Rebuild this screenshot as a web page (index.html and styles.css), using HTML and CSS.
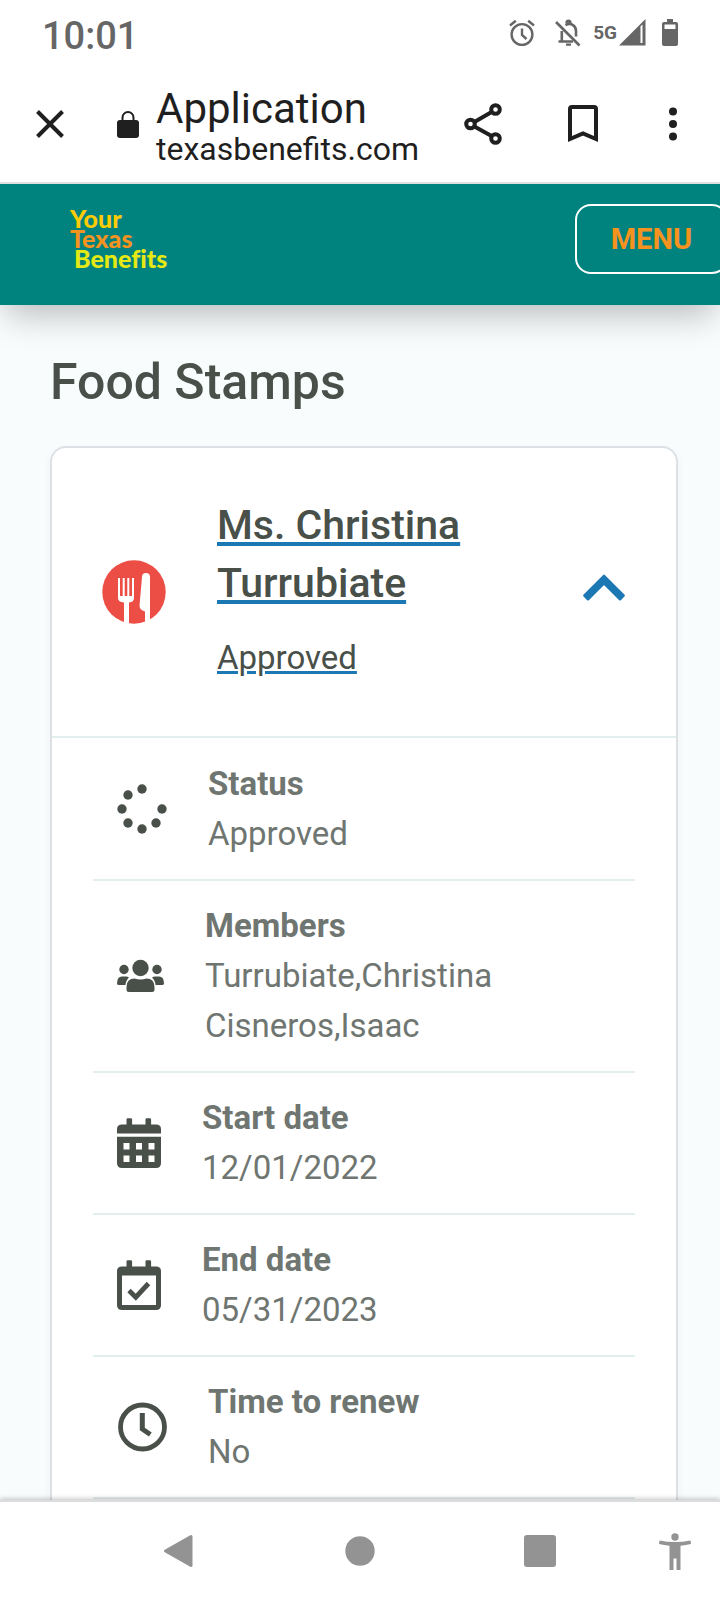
FILE: index.html
```html
<!DOCTYPE html>
<html lang="en">
<head>
<meta charset="utf-8">
<meta name="viewport" content="width=device-width, initial-scale=1">
<title>Application</title>
<link rel="stylesheet" href="styles.css">
</head>
<body>
<div class="screen">
  <div class="status-bar">
    <time class="clock">10:01</time>
    <div class="status-icons">
      <svg class="alarm" width="26" height="28" viewBox="0 0 26 28" fill="none" stroke="#666" stroke-width="2.4">
        <circle cx="13" cy="15.5" r="10.4"/><path d="M1 6.5 6.8 1.8M25 6.5 19.200 1.800M13 9.500v6.500l4.500 4"/>
      </svg>
      <svg class="bell" width="26" height="28" viewBox="0 0 26 28" fill="none" stroke="#666" stroke-width="2.6">
        <path d="M1 3 24.500 26.500"/><path d="M3.500 22.500H18M6.800 22V12M10.500 6.200C15.500 2.800 21 6.500 21 12v5.500"/><path d="M11.500 3.500a2 2 0 0 1 4 0zM11 25.600h5" stroke-width="2.200"/>
      </svg>
      <span class="network">5G</span>
      <svg class="signal" width="27" height="27" viewBox="0 0 27 27"><path fill="#666" d="M0 26.500 26.500 0v26.500z"/><path fill="#fff" d="M21.500 7.500 23.500 5.500V24h-2z"/></svg>
      <svg width="16" height="27" viewBox="0 0 16 27"><path fill="#666" fill-rule="evenodd" d="M5 0h6v3h3q2 0 2 2v20q0 2-2 2H2q-2 0-2-2V5q0-2 2-2h3zM2.500 5.500V10h11V5.500z"/></svg>
    </div>
  </div>

  <div class="toolbar">
    <button class="tool close" type="button" aria-label="Close"><svg width="28" height="28" viewBox="0 0 28 28"><path d="M1.500 1.500 26.500 26.500M26.500 1.500 1.500 26.500" stroke="#1f1f1f" stroke-width="4"/></svg></button>
    <svg class="lock" width="22" height="27" viewBox="0 0 22 27"><rect y="9" width="22" height="18" rx="3" fill="#1f1f1f"/><path d="M5.500 10V6.500a5.500 5.500 0 0 1 11 0V10" fill="none" stroke="#1f1f1f" stroke-width="2"/></svg>
    <div class="page-info">
      <div class="page-title">Application</div>
      <div class="page-host">texasbenefits.com</div>
    </div>
    <button class="tool share" type="button" aria-label="Share"><svg width="38" height="42" viewBox="0 0 38 42" fill="none" stroke="#1f1f1f" stroke-width="4"><path d="M9.500 19.500 28.500 8.500M9.500 23 28.500 33.500"/><circle cx="6.500" cy="21" r="4.300"/><circle cx="31.500" cy="6.500" r="4.300"/><circle cx="31.500" cy="35.500" r="4.300"/></svg></button>
    <button class="tool bookmark" type="button" aria-label="Bookmark"><svg width="30" height="38" viewBox="0 0 30 38"><path d="M2 34V4q0-2 2-2h22q2 0 2 2v30l-13-5.500z" fill="none" stroke="#1f1f1f" stroke-width="4"/></svg></button>
    <button class="tool" type="button" aria-label="More options"><svg width="8" height="34" viewBox="0 0 8 34" fill="#1f1f1f"><circle cx="4" cy="4.500" r="4"/><circle cx="4" cy="17" r="4"/><circle cx="4" cy="29.500" r="4"/></svg></button>
  </div>

  <div class="page">
    <header class="site-header">
      <a class="logo" href="#" aria-label="Your Texas Benefits">
        <span class="logo-your">Your</span>
        <span class="logo-texas">Texas</span>
        <span class="logo-benefits">Benefits</span>
      </a>
      <button class="menu" type="button">MENU</button>
    </header>

    <main class="content">
      <h1 class="title">Food Stamps</h1>
      <section class="card">
        <button class="card-header" type="button" aria-expanded="true">
          <svg class="food" width="64" height="64" viewBox="0 0 64 64">
            <circle cx="32" cy="32" r="31.700" fill="#ec4d44"/>
            <path fill="#fff" d="M16 18h2v18h2.700V18h2v18h2.600V18h2v18H30V18h2v20q0 4-5 4.500V63.300q-3-.3-5-.9V42.500q-6-.5-6-4.500zM40 17q0-4 4-4 4 0 4 4v42.500q-2 1.200-5 2.400V51.500q-5.500-1.500-5.500-6z"/>
          </svg>
          <span class="summary">
            <span class="person">Ms. Christina Turrubiate</span>
            <span class="state">Approved</span>
          </span>
          <svg class="chevron" width="42" height="36" viewBox="0 0 42 36"><path d="M21 2.200 40.300 21.500 37 24.900 21 9 5 24.900 1.700 21.500z" fill="#1b78b3" stroke="#1b78b3" stroke-width="3" stroke-linejoin="round"/></svg>
        </button>

        <ul class="details">
          <li class="row">
            <svg width="50" height="50" viewBox="0 0 50 50" fill="#485049"><circle cx="25" cy="5" r="4.700"/><circle cx="11" cy="11" r="4.700"/><circle cx="5" cy="25" r="4.700"/><circle cx="11" cy="39" r="4.700"/><circle cx="25" cy="45" r="4.700"/><circle cx="39" cy="39" r="4.700"/><circle cx="45" cy="25" r="4.700"/></svg>
            <div class="text"><div class="label">Status</div><div>Approved</div></div>
          </li>
          <li class="row">
            <svg width="47" height="34" viewBox="0 0 47 34" fill="#485049"><circle cx="7" cy="10.500" r="4.700"/><circle cx="40" cy="10.500" r="4.700"/><circle cx="23.500" cy="9" r="8.200"/><path d="M0 24.500q0-7 5-7h4q1.500 0 3 1-3 2.500-3.500 7.500H2q-2 0-2-1.500zM47 24.500q0-7-5-7h-4q-1.500 0-3 1 3 2.500 3.500 7.500H45q2 0 2-1.500zM12 33q-2.500 0-2.500-2.500V28q0-8.500 8-8.500 6 2 12 0 8 0 8 8.500v2.500q0 2.500-2.500 2.500z"/></svg>
            <div class="text"><div class="label">Members</div><div>Turrubiate,Christina</div><div>Cisneros,Isaac</div></div>
          </li>
          <li class="row">
            <svg width="44" height="50" viewBox="0 0 44 50" fill="#485049"><path d="M9.500 6.500v-5Q9.500.3 10.700.3h3.200q1.200 0 1.200 1.200v5H28.500v-5q0-1.200 1.200-1.200h3.200q1.200 0 1.200 1.200v5H39q5 0 5 4.500v4.500H0V11q0-4.500 5-4.500z"/><path fill-rule="evenodd" d="M0 18.800h44V45q0 5-5 5H5q-5 0-5-5zM6.500 25v6.500h6V25zm12.500 0v6.500h6V25zm12.500 0v6.500h6V25zm-25 12.500V44h6v-6.500zm12.500 0V44h6v-6.500zm12.500 0V44h6v-6.500z"/></svg>
            <div class="text"><div class="label">Start date</div><div>12/01/2022</div></div>
          </li>
          <li class="row">
            <svg width="44" height="50" viewBox="0 0 44 50" fill="#485049"><path fill-rule="evenodd" d="M9.500 6.500v-5Q9.500.3 10.700.3h3.200q1.200 0 1.200 1.200v5H28.500v-5q0-1.200 1.200-1.200h3.200q1.200 0 1.200 1.200v5H39q5 0 5 4.500v34q0 5-5 5H5q-5 0-5-5V11q0-4.500 5-4.500zM5 15.500V45h34V15.500z"/><path d="M12 30.500 18.800 37.200 31.500 23.500" fill="none" stroke="#485049" stroke-width="4.800"/></svg>
            <div class="text"><div class="label">End date</div><div>05/31/2023</div></div>
          </li>
          <li class="row">
            <svg width="50" height="50" viewBox="0 0 50 50" fill="none" stroke="#485049"><circle cx="25.500" cy="25" r="22" stroke-width="4.800"/><path d="M25.300 11v16l8 5.500" stroke-width="5"/></svg>
            <div class="text"><div class="label">Time to renew</div><div>No</div></div>
          </li>
        </ul>
      </section>
    </main>
  </div>

  <nav class="system-nav" aria-label="System">
    <button class="tool" type="button" aria-label="Back"><svg width="34" height="34" viewBox="0 0 34 34"><path d="M2.500 17 28 2.500v29z" fill="#939393" stroke="#939393" stroke-width="3" stroke-linejoin="round"/></svg></button>
    <button class="tool" type="button" aria-label="Home"><svg width="30" height="30" viewBox="0 0 30 30"><circle cx="15" cy="15" r="14.700" fill="#939393"/></svg></button>
    <button class="tool" type="button" aria-label="Recent apps"><svg width="32" height="32" viewBox="0 0 32 32"><rect width="32" height="32" rx="3" fill="#939393"/></svg></button>
    <button class="tool" type="button" aria-label="Accessibility"><svg width="32" height="37" viewBox="0 0 32 37" fill="#939393"><circle cx="16" cy="4" r="3.700"/><path d="M.5 7.500Q16 10.500 31.500 7.500L32 11q-5 1.200-10.500 1.700V37h-4V25.500h-3V37h-4V12.700Q5 12.200 0 11z"/></svg></button>
  </nav>
</div>
</body>
</html>
```
FILE: styles.css
```css
* {
  box-sizing: border-box;
}

body {
  margin: 0;
  background: #fff;
  font-family: Roboto, "Liberation Sans", sans-serif;
  color: #485049;
}

svg {
  display: block;
  flex: none;
}

button {
  font-family: inherit;
  color: inherit;
  background: none;
  border: 0;
  padding: 0;
}

.screen {
  display: flex;
  flex-direction: column;
  height: 100vh;
  overflow: hidden;
}

.status-bar {
  display: flex;
  justify-content: space-between;
  align-items: center;
  height: 68px;
  flex: none;
  padding: 0 42px;
  color: #666;
}

.clock {
  padding-top: 3px;
  font-size: 38px;
  font-weight: 500;
}

.status-icons {
  display: flex;
  align-items: center;
  padding-bottom: 3px;
}

.alarm {
  margin-right: 20px;
}

.bell {
  margin-right: 12px;
}

.network {
  font-size: 19px;
  font-weight: 700;
}

.signal {
  margin: 0 16px 0 2px;
}

.toolbar {
  display: flex;
  align-items: center;
  flex: none;
  height: 116px;
  padding: 0 43px 2px 36px;
  border-bottom: 2px solid #e0e0e0;
  color: #1f1f1f;
}

.tool {
  display: flex;
  justify-content: center;
  align-items: center;
}

.close {
  margin-right: 53px;
}

.lock {
  margin-right: 17px;
}

.page-info {
  flex: 1;
  padding-top: 8px;
  white-space: nowrap;
}

.page-title {
  font-size: 42px;
  line-height: 42px;
}

.page-host {
  font-size: 32px;
  line-height: 38px;
}

.share {
  margin-right: 66px;
}

.bookmark {
  margin-right: 71px;
}

.page {
  flex: 1;
  min-height: 0;
  overflow: hidden;
  background: #f8fcfd;
}

.site-header {
  position: relative;
  display: flex;
  justify-content: space-between;
  align-items: flex-start;
  padding: 20px 0 31px 70px;
  background: #00837e;
  box-shadow: 0 16px 32px -6px rgba(0, 0, 0, 0.25);
}

.logo {
  display: flex;
  flex-direction: column;
  padding-top: 4px;
  font-family: Lato, sans-serif;
  font-size: 25px;
  font-weight: 900;
  font-variant-ligatures: none;
  line-height: 20px;
  text-decoration: none;
}

.logo-your {
  color: #ffcb05;
}

.logo-texas {
  color: #f6921e;
}

.logo-benefits {
  padding-left: 4px;
  color: #e6e813;
}

.menu {
  height: 70px;
  margin-right: -8px;
  padding: 0 34px;
  border: 2px solid #fff;
  border-radius: 16px;
  color: #f6921e;
  font-size: 29px;
  font-weight: 700;
}

.content {
  padding: 47px 42px 0 50px;
}

.title {
  margin: 0 0 34px;
  font-size: 50px;
  font-weight: 500;
  line-height: 60px;
}

.card {
  border: 2px solid #dde1e6;
  border-radius: 16px;
  background: #fff;
  box-shadow: 0 4px 8px rgba(0, 0, 0, 0.05);
}

.card-header {
  display: flex;
  align-items: center;
  width: 100%;
  padding: 48px 51px 48px 50px;
  border-bottom: 2px solid #e3eeee;
  text-align: left;
}

.summary {
  flex: 1;
  padding: 0 0 5px 51px;
}

.person,
.state {
  display: block;
  text-decoration: underline #1b78b3;
}

.person {
  font-size: 41px;
  font-weight: 500;
  line-height: 58px;
  text-decoration-thickness: 4px;
  text-underline-offset: 3px;
}

.state {
  padding-top: 21px;
  font-size: 33px;
  line-height: 50px;
  text-decoration-thickness: 3px;
  text-underline-offset: 2px;
}

.details {
  margin: 0;
  padding: 1px 41px 40px;
  list-style: none;
}

.row {
  display: flex;
  align-items: center;
  gap: 41px;
  padding: 20px 24px;
  border-bottom: 2px solid #e3eeee;
  color: #6f7671;
  font-size: 33px;
  line-height: 50px;
}

.label {
  font-weight: 700;
}

.system-nav {
  position: relative;
  display: grid;
  grid-template-columns: 2fr 2fr 2fr 1fr;
  flex: none;
  height: 100px;
  padding-left: 12.5%;
  border-top: 2px solid #dcdcdc;
  background: #fff;
  box-shadow: 0 -1px 5px rgba(0, 0, 0, 0.25);
}
```
